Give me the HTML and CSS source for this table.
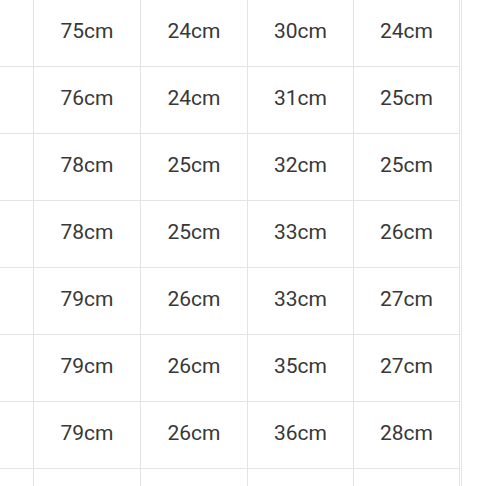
FILE: index.html
```html
<!DOCTYPE html>
<html>
<head>
<meta charset="utf-8">
<link rel="stylesheet" href="styles.css">
</head>
<body>
<div class="frame">
  <div class="grid">
    <div class="cell lead"></div><div class="cell">75cm</div><div class="cell">24cm</div><div class="cell">30cm</div><div class="cell">24cm</div>
    <div class="cell lead"></div><div class="cell">76cm</div><div class="cell">24cm</div><div class="cell">31cm</div><div class="cell">25cm</div>
    <div class="cell lead"></div><div class="cell">78cm</div><div class="cell">25cm</div><div class="cell">32cm</div><div class="cell">25cm</div>
    <div class="cell lead"></div><div class="cell">78cm</div><div class="cell">25cm</div><div class="cell">33cm</div><div class="cell">26cm</div>
    <div class="cell lead"></div><div class="cell">79cm</div><div class="cell">26cm</div><div class="cell">33cm</div><div class="cell">27cm</div>
    <div class="cell lead"></div><div class="cell">79cm</div><div class="cell">26cm</div><div class="cell">35cm</div><div class="cell">27cm</div>
    <div class="cell lead"></div><div class="cell">79cm</div><div class="cell">26cm</div><div class="cell">36cm</div><div class="cell">28cm</div>
    <div class="cell lead"></div><div class="cell"></div><div class="cell"></div><div class="cell"></div><div class="cell"></div>
  </div>
</div>
</body>
</html>
```
FILE: styles.css
```css
html, body {
  margin: 0;
  padding: 0;
  background: #ffffff;
  overflow: hidden;
  width: 486px;
  height: 486px;
}
.frame {
  width: 460px;
  height: 486px;
  overflow: hidden;
  padding-right: 1px;
  border-right: 1px solid #e4e4e4;
  box-sizing: content-box;
}
.grid {
  display: grid;
  grid-template-columns: 34px 107px 107px 106px 106px;
  grid-auto-rows: 67px;
}
.cell {
  box-sizing: border-box;
  border-right: 1px solid #e4e4e4;
  border-bottom: 1px solid #e4e4e4;
  display: flex;
  align-items: center;
  justify-content: center;
  padding-bottom: 4px;
  font-family: Roboto, "Liberation Sans", sans-serif;
  font-size: 21px;
  color: #383838;
}
```
